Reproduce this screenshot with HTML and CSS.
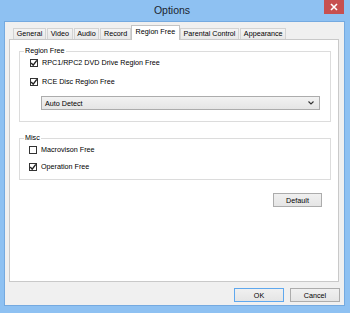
FILE: index.html
```html
<!DOCTYPE html>
<html lang="en">
<head>
  <meta charset="UTF-8" />
  <title>Options</title>
  <link rel="stylesheet" href="styles.css">
</head>
<body>
  <div class="window">
    <!-- Title bar -->
    <div class="titlebar">
      <span></span>
      <div class="title">Options</div>
      <div class="close">
        <svg width="8" height="8" viewBox="0 0 8 8"><path d="M1 1 L7 7 M7 1 L1 7" stroke="#fff" stroke-width="1.6"/></svg>
      </div>
    </div>

    <div class="client">
      <!-- Tabs -->
      <div class="tabs">
        <div class="tab">General</div>
        <div class="tab">Video</div>
        <div class="tab">Audio</div>
        <div class="tab">Record</div>
        <div class="tab active">Region Free</div>
        <div class="tab">Parental Control</div>
        <div class="tab">Appearance</div>
      </div>

      <div class="panel">
        <fieldset class="group region">
          <legend>Region Free</legend>
          <label class="check-row">
            <span class="box checked"><svg width="8" height="8" viewBox="0 0 8 8"><path d="M1.2 4 L3.2 6.2 L6.8 1.4" fill="none" stroke="#222" stroke-width="1.4"/></svg></span>
            RPC1/RPC2 DVD Drive Region Free
          </label>
          <label class="check-row">
            <span class="box checked"><svg width="8" height="8" viewBox="0 0 8 8"><path d="M1.2 4 L3.2 6.2 L6.8 1.4" fill="none" stroke="#222" stroke-width="1.4"/></svg></span>
            RCE Disc Region Free
          </label>
          <div class="select">
            <span>Auto Detect</span>
            <svg width="6" height="4" viewBox="0 0 6 4"><path d="M0.5 0.5 L3 3 L5.5 0.5" fill="none" stroke="#333" stroke-width="1.1"/></svg>
          </div>
        </fieldset>

        <fieldset class="group misc">
          <legend>Misc</legend>
          <label class="check-row">
            <span class="box"></span>
            Macrovison Free
          </label>
          <label class="check-row">
            <span class="box checked"><svg width="8" height="8" viewBox="0 0 8 8"><path d="M1.2 4 L3.2 6.2 L6.8 1.4" fill="none" stroke="#222" stroke-width="1.4"/></svg></span>
            Operation Free
          </label>
        </fieldset>

        <div class="default-row">
          <button class="btn">Default</button>
        </div>
      </div>

      <!-- Dialog buttons -->
      <div class="buttons">
        <button class="btn ok">OK</button>
        <button class="btn">Cancel</button>
      </div>
    </div>
  </div>
</body>
</html>
```

FILE: styles.css
```css
body {
  margin: 0;
  font-family: 'Liberation Sans', Arial, sans-serif;
  font-size: 7.2px;
  color: #000;
}
.window {
  width: 350px;
  height: 313px;
  box-sizing: border-box;
  background-color: #8ec1f2;
  display: flex;
  flex-direction: column;
}
/* Title bar */
.titlebar {
  height: 22px;
  display: grid;
  grid-template-columns: 1fr auto 1fr;
  padding-right: 6px;
}
.title {
  font-size: 10.5px;
  line-height: 21px;
  color: #1b2530;
}
.close {
  justify-self: end;
  width: 20px;
  height: 14px;
  background-color: #c75050;
  display: flex;
  align-items: center;
  justify-content: center;
}
.client {
  flex: 1;
  margin: 0 6px 8px 5px;
  background-color: #f0f0f0;
  box-shadow: 0 0 0 1px #75aae0;
  display: flex;
  flex-direction: column;
}
/* Tabs */
.tabs {
  display: flex;
  align-items: flex-end;
  gap: 1px;
  padding: 3px 0 0 8px;
  height: 14px;
}
.tab {
  height: 10px;
  line-height: 10px;
  padding: 0 2.7px;
  border: 1px solid #d3d3d3;
  border-bottom: none;
  background: linear-gradient(#f4f4f4, #e8e8e8);
  position: relative;
}
.tab.active {
  height: 14px;
  line-height: 12px;
  margin: 0 -1px -1px;
  padding: 0 3.7px;
  background: #fff;
  border-color: #c4c4c4;
  z-index: 1;
}
.panel {
  flex: 1;
  margin: 0 5px 0 4px;
  background: #fff;
  border: 1px solid #c9c9c9;
  padding: 7px 7px 0 9px;
  display: flex;
  flex-direction: column;
}
/* Group boxes */
.group {
  margin: 0;
  border: 1px solid #dcdcdc;
  padding: 0 10px;
}
.group legend {
  padding: 0 1px;
  margin-left: -6px;
  line-height: 8px;
}
.region {
  height: 75px;
  box-sizing: border-box;
}
.misc {
  margin-top: 12px;
  height: 46px;
  box-sizing: border-box;
}
.check-row {
  display: flex;
  align-items: center;
  gap: 4px;
  height: 9px;
  margin-top: 10px;
}
.check-row:first-of-type {
  margin-top: 3px;
}
.misc .check-row {
  margin-left: -1px;
}
.misc .check-row + .check-row {
  margin-top: 8px;
}
.box {
  width: 6px;
  height: 6px;
  border: 1px solid #333;
  background: #fff;
  display: flex;
  align-items: center;
  justify-content: center;
}
.box svg {
  flex: none;
}
.select {
  margin: 10px 0 0 11px;
  height: 14px;
  box-sizing: border-box;
  border: 1px solid #acacac;
  background: linear-gradient(#f2f2f2, #e5e5e5);
  display: flex;
  align-items: center;
  justify-content: space-between;
  padding: 0 5px 0 3px;
}
.default-row {
  display: flex;
  justify-content: flex-end;
  margin-top: 13px;
  padding-right: 9px;
}
/* Buttons */
.btn {
  width: 49px;
  height: 14px;
  padding: 0;
  font-family: inherit;
  font-size: 7.2px;
  color: #000;
  border: 1px solid #acacac;
  background: linear-gradient(#f0f0f0, #e5e5e5);
}
.btn.ok {
  border-color: #5fa8ee;
}
.buttons {
  display: flex;
  justify-content: flex-end;
  gap: 6px;
  padding: 6px 4px 3px 0;
}
.buttons .btn {
  width: 50px;
}
```
